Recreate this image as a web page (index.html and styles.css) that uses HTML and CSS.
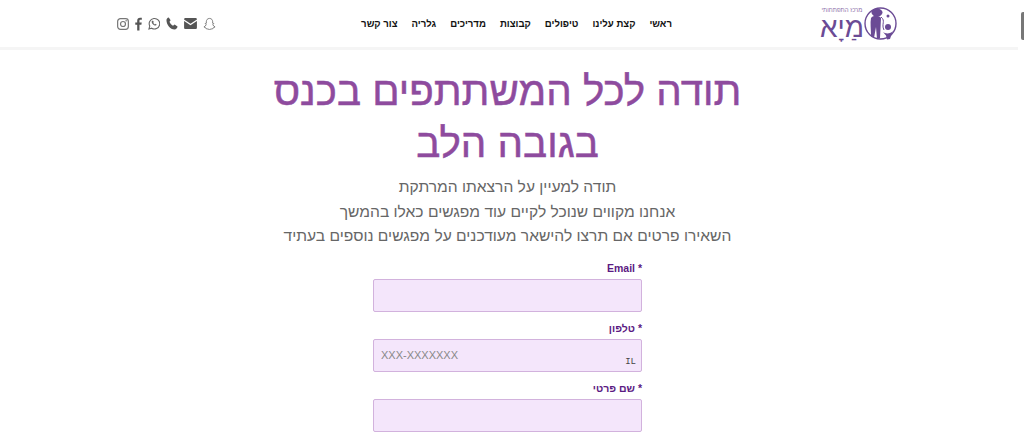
FILE: index.html
```html
<!DOCTYPE html>
<html lang="he" dir="rtl">

<head>
    <meta charset="UTF-8">
    <title>מיא</title>
    <link rel="stylesheet" href="styles.css">
</head>

<body>

    <header class="site-header">
        <div class="logo">
            <svg class="logo-mark" width="33" height="33" viewBox="0 0 33 33">
                <circle cx="16.500" cy="16.500" r="15.500" fill="none" stroke="#6b4b95" stroke-width="1.400" />
                <ellipse cx="13" cy="5.500" rx="5.500" ry="4" fill="#6b4b95" />
                <path d="M7 11C9 8 15 8 17 11L16 31 13 32 12 20 10 31 7 29C7 22 6 16 7 11z" fill="#6b4b95" />
                <path d="M17 10C22 14 17 17 20 23" fill="none" stroke="#6b4b95" />
                <circle cx="24" cy="20" r="3" fill="#6b4b95" />
                <path d="M19 25c2 2 8 2 10-1l-2 5-1 3-3 .5-1-4z" fill="#6b4b95" />
                <circle cx="24" cy="9" r="1.500" fill="#6b4b95" />
            </svg>
            <div class="logo-text">
                <span class="logo-small">מרכז התפתחותי</span>
                <span class="logo-name">מַיָא</span>
            </div>
        </div>
        <nav class="main-nav">
            <a href="#">ראשי</a>
            <a href="#">קצת עלינו</a>
            <a href="#">טיפולים</a>
            <a href="#">קבוצות</a>
            <a href="#">מדריכים</a>
            <a href="#">גלריה</a>
            <a href="#">צור קשר</a>
        </nav>
        <div class="social">
            <svg width="13" height="14" viewBox="0 0 14 15">
                <path d="M7 1.500c2.300 0 3.400 1.700 3.400 3.600v1.600l1.200.3-1 1.200c.4 1.200 1.200 2 2.400 2.400-.5.800-1.400.8-2 1l-.5 1c-1.300-.2-2 .8-3.500.8s-2.200-1-3.500-.8l-.5-1c-.6-.2-1.500-.2-2-1 1.200-.4 2-1.200 2.400-2.400l-1-1.200 1.200-.3V5.100C3.600 3.200 4.700 1.500 7 1.500z" fill="none" stroke="#777" />
            </svg>
            <svg width="13" height="11" viewBox="0 0 14 12">
                <path d="M0 1.500C0 .7.600 0 1.400 0h11.200c.8 0 1.400.7 1.400 1.500L7 6.300z" fill="#555" />
                <path d="M0 3.200V10.500c0 .8.600 1.500 1.400 1.500h11.200c.8 0 1.400-.7 1.400-1.500V3.200L7 8z" fill="#555" />
            </svg>
            <svg width="12" height="13" viewBox="0 0 13 14">
                <path d="M3 .5 5 3.500 3.800 5.200c.7 2 2 3.400 3.800 4.300L9.300 8l3.200 2.200c-.3 1.700-1.500 3.300-3.200 3.300C4.500 13.500 .5 8 .5 3.500.5 2 1.500.8 3 .5z" fill="#555" />
            </svg>
            <svg width="12" height="13" viewBox="0 0 13 14">
                <path d="M1 13l.9-3.200A5.700 5.700 0 1 1 4 12.100z" fill="none" stroke="#666" stroke-width="1.200" />
                <path d="M4.500 4c-.8.800-.6 2 .3 3.200 1 1.300 2.200 2.100 3.400 2 .7-.1 1-.6 1.100-1.200L8.200 7.300l-.7.700c-.8-.4-1.400-1-1.800-1.800l.6-.7L5.500 4z" fill="#666" />
            </svg>
            <svg width="7" height="14" viewBox="0 0 8 15">
                <path d="M2.500 15V8.300H.3V5.700h2.200V3.800C2.500 1.500 3.800.3 5.800.3c1 0 1.700.1 2 .1v2.300H6.400c-1.100 0-1.300.5-1.300 1.300v1.700h2.600l-.4 2.600H5.100V15z" fill="#555" />
            </svg>
            <svg width="12" height="12" viewBox="0 0 13 13">
                <rect x=".7" y=".7" width="11.600" height="11.600" rx="3" fill="none" stroke="#777" stroke-width="1.300" />
                <circle cx="6.500" cy="6.500" r="2.700" fill="none" stroke="#777" stroke-width="1.300" />
                <circle cx="9.900" cy="3.100" r=".8" fill="#777" />
            </svg>
        </div>
    </header>

    <main class="content">
        <h1>תודה לכל המשתתפים בכנס<br>בגובה הלב</h1>
        <div class="thanks">
            <p>תודה למעיין על הרצאתו המרתקת</p>
            <p>אנחנו מקווים שנוכל לקיים עוד מפגשים כאלו בהמשך</p>
            <p>השאירו פרטים אם תרצו להישאר מעודכנים על מפגשים נוספים בעתיד</p>
        </div>
        <form class="signup">
            <div class="field">
                <label for="email">* Email</label>
                <input type="text" id="email">
            </div>
            <div class="field">
                <label for="phone">* טלפון</label>
                <div class="phone-box">
                    <input type="text" id="phone" dir="ltr" placeholder="XXX-XXXXXXX">
                    <span class="country">IL</span>
                </div>
            </div>
            <div class="field">
                <label for="name">* שם פרטי</label>
                <input type="text" id="name">
            </div>
        </form>
    </main>

    <div class="scrollbar"><div class="scroll-thumb"></div></div>

</body>

</html>
```

FILE: styles.css
```css
html,
body {
    height: 100%;
    overflow: hidden;
}

body {
    margin: 0;
    font-family: "Liberation Sans", Arial, sans-serif;
    background-color: #fff;
}

.site-header {
    height: 47px;
    margin-right: 6px;
    padding: 0 121px 0 117px;
    display: flex;
    align-items: center;
    justify-content: space-between;
    background-color: #fff;
    border-bottom: 3px solid #f5f5f5;
}

.logo {
    display: flex;
    align-items: center;
    gap: 2px;
    color: #6b4b95;
}

.logo-text {
    display: flex;
    flex-direction: column;
    align-items: center;
    width: 40px;
}

.logo-small {
    font-size: 6px;
    line-height: 7px;
    white-space: nowrap;
    color: #8a6ea8;
}

.logo-name {
    margin-top: 2px;
    font-size: 28px;
    line-height: 24px;
}

.main-nav {
    display: flex;
    gap: 14px;
    margin-right: 5px;
}

.main-nav a {
    font-size: 9.600px;
    font-weight: bold;
    color: #111;
    text-decoration: none;
}

.social {
    display: flex;
    align-items: center;
    gap: 6px;
}

.content {
    margin-right: 9px;
    text-align: center;
}

h1 {
    margin: 16px 0 0;
    font-size: 40.300px;
    line-height: 52px;
    font-weight: normal;
    color: #8e4b9e;
    -webkit-text-stroke: 0.5px #8e4b9e;
}

.thanks {
    margin-top: 5px;
    font-size: 15.600px;
    line-height: 24.500px;
    color: #666;
}

.thanks p {
    margin: 0;
}

.signup {
    width: 269px;
    margin: 12px auto 0;
}

.field {
    margin-bottom: 9px;
}

.field label {
    display: block;
    margin-bottom: 4px;
    font-size: 10.500px;
    line-height: 14px;
    font-weight: bold;
    text-align: right;
    color: #5b1a82;
}

.field input {
    display: block;
    box-sizing: border-box;
    width: 100%;
    height: 33px;
    padding: 0 7px;
    font-family: inherit;
    font-size: 11px;
    background-color: #f4e6fb;
    border: 1px solid #d2b2dd;
    border-radius: 2px;
}

.field input::placeholder {
    color: #888;
}

.phone-box {
    position: relative;
}

.country {
    position: absolute;
    right: 6px;
    bottom: 5px;
    font-family: "Liberation Mono", monospace;
    font-size: 9px;
    color: #444;
}

.scrollbar {
    position: fixed;
    top: 0;
    right: 0;
    bottom: 0;
    width: 3px;
    background-color: #fff;
}

.scroll-thumb {
    height: 28px;
    margin-top: 12px;
    background-color: #777;
    border-radius: 2px 0 0 2px;
}
```
